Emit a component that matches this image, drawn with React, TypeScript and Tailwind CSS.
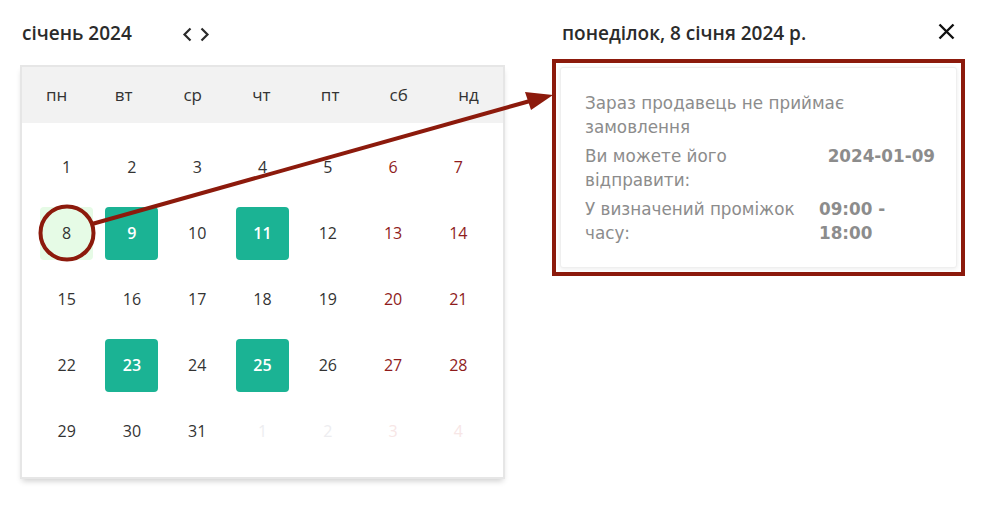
import React from "react";

type Day = {
  n: number;
  kind?: "open" | "today";
  weekend?: boolean;
  faded?: boolean;
};

const weekdays = ["пн", "вт", "ср", "чт", "пт", "сб", "нд"];

const open = [9, 11, 23, 25];

function buildWeeks(): Day[][] {
  const days: Day[] = [];
  for (let i = 1; i <= 31; i++) {
    const col = (i - 1) % 7;
    days.push({
      n: i,
      weekend: col >= 5,
      kind: i === 8 ? "today" : open.includes(i) ? "open" : undefined,
    });
  }
  for (let i = 1; i <= 4; i++) {
    days.push({ n: i, faded: true, weekend: i >= 3 });
  }
  const weeks: Day[][] = [];
  for (let i = 0; i < days.length; i += 7) weeks.push(days.slice(i, i + 7));
  return weeks;
}

function DayCell({ day }: { day: Day }) {
  let cls = "text-[#333333]";
  if (day.kind === "open") cls = "bg-[#1bb394] text-white font-semibold rounded-[4px]";
  else if (day.kind === "today") cls = "bg-[#e6fbe6] text-[#333333] rounded-[4px]";
  else if (day.faded) cls = day.weekend ? "text-[#f7e6e6]" : "text-[#ededf0]";
  else if (day.weekend) cls = "text-[#8f1c1c]";

  return (
    <div className="flex h-[66px] items-center justify-center">
      <div className={`flex h-[53px] w-[53px] items-center justify-center text-[16px] ${cls}`}>
        {day.n}
      </div>
    </div>
  );
}

function Calendar() {
  const weeks = buildWeeks();
  return (
    <div className="ml-[22px] w-[481px]">
      <div className="flex h-[67px] items-center pb-[1px]">
        <h2 className="w-[160px] text-[19px] font-semibold text-[#2b2b2b]">січень 2024</h2>
        <div className="flex items-center gap-[8px] pt-[2px]">
          <svg width="10" height="15" viewBox="0 0 10 15" fill="none">
            <path d="M8.5 1.5 L2.5 7.5 L8.5 13.5" stroke="#2b2b2b" strokeWidth="2.2" />
          </svg>
          <svg width="10" height="15" viewBox="0 0 10 15" fill="none">
            <path d="M1.5 1.5 L7.5 7.5 L1.5 13.5" stroke="#2b2b2b" strokeWidth="2.2" />
          </svg>
        </div>
      </div>

      <div className="bg-white shadow-[0_0_0_2px_#e6e6e6,0_4px_6px_rgba(0,0,0,0.2)]">
        <div className="grid h-[56px] grid-cols-7 items-center bg-[#f2f2f2]">
          {weekdays.map((w) => (
            <div key={w} className="pl-[24px] text-[17px] text-[#333333]">
              {w}
            </div>
          ))}
        </div>
        <div className="px-[12px] pt-[11px] pb-[13px]">
          {weeks.map((week, i) => (
            <div key={i} className="grid grid-cols-7">
              {week.map((d, j) => (
                <DayCell key={j} day={d} />
              ))}
            </div>
          ))}
        </div>
      </div>
    </div>
  );
}

function DetailPanel() {
  return (
    <div className="ml-[49px] w-[413px]">
      <div className="flex h-[59px] items-start justify-between pt-[19px]">
        <h2 className="pl-[10px] text-[19px] font-semibold text-[#2b2b2b]">
          понеділок, 8 січня 2024 р.
        </h2>
        <svg className="mt-[4px] mr-[10px]" width="17" height="17" viewBox="0 0 17 17" fill="none">
          <path d="M1.5 1.5 L15.5 15.5 M15.5 1.5 L1.5 15.5" stroke="#111111" strokeWidth="2.4" />
        </svg>
      </div>
      <div className="border-[4px] border-[#8c1a0c] p-[4px]">
        <div className="h-[201px] rounded-[3px] border border-[#efefef] bg-white pt-[23px] pr-[21px] pl-[24px] font-['DejaVu_Sans',sans-serif] text-[16.8px] leading-[24px] text-[#8c8c8c] shadow-[0_1px_4px_rgba(0,0,0,0.08)]">
          <p>Зараз продавець не приймає замовлення</p>
          <div className="mt-[5px] flex items-start">
            <span className="w-[200px] shrink-0">Ви можете його відправити:</span>
            <span className="ml-auto font-bold">2024-01-09</span>
          </div>
          <div className="mt-[5px] flex items-start">
            <span className="w-[234px] shrink-0">У визначений проміжок часу:</span>
            <span className="w-[100px] font-bold">09:00 - 18:00</span>
          </div>
        </div>
      </div>
    </div>
  );
}

export default function App() {
  return (
    <div className="relative h-[508px] w-[983px] overflow-hidden bg-white font-['Open_Sans','Noto_Sans',sans-serif]">
      <div className="flex items-start">
        <Calendar />
        <DetailPanel />
      </div>
      <svg className="pointer-events-none absolute top-0 left-0" width="983" height="508" viewBox="0 0 983 508" fill="none">
        <circle cx="67" cy="233" r="26.5" stroke="#8c1a0c" strokeWidth="4" />
        <line x1="92" y1="224" x2="530" y2="101" stroke="#8c1a0c" strokeWidth="4" />
        <polygon points="553,95 525,92 531,110" fill="#8c1a0c" />
      </svg>
    </div>
  );
}
